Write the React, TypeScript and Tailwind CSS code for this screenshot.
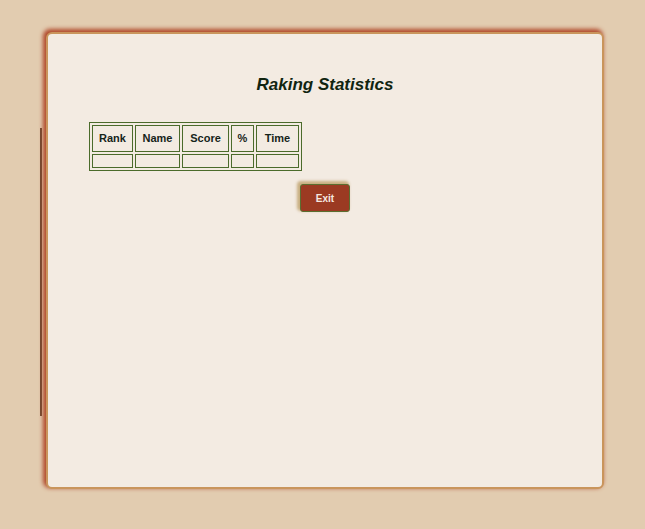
const columns = [
  { label: 'Rank', w: 'w-[41px]' },
  { label: 'Name', w: 'w-[45px]' },
  { label: 'Score', w: 'w-[47px]' },
  { label: '%', w: 'w-[23px]' },
  { label: 'Time', w: 'w-[43px]' },
];

export default function App() {
  return (
    <div className="min-h-screen bg-[#e2ccb0] flex items-start pl-[40px] pt-[32px] font-['Liberation_Sans',Arial,sans-serif]">
      {/* left edge strip */}
      <div className="w-[2px] h-[288px] mt-[96px] bg-[#6e4a32]" />

      {/* main panel */}
      <div className="ml-[4px] w-[558px] h-[457px] rounded-[6px] border-2 border-[#c9955c] bg-[#f3ebe2] shadow-[-2px_-2px_4px_1px_#b0482a] flex flex-col pt-[41px]">
        <h1 className="text-center text-[17px] leading-[20px] font-bold italic text-[#102410]">
          Raking Statistics
        </h1>

        <table className="self-start mt-[27px] ml-[41px] border border-[#4b6b2b] border-separate border-spacing-[2px] text-[11px] font-bold text-[#16241a]">
          <thead>
            <tr>
              {columns.map((c) => (
                <th key={c.label} className={`${c.w} h-[27px] p-0 border border-[#4b6b2b] text-center align-middle`}>
                  {c.label}
                </th>
              ))}
            </tr>
          </thead>
          <tbody>
            <tr>
              {columns.map((c) => (
                <td key={c.label} className="h-[14px] p-0 border border-[#4b6b2b]" />
              ))}
            </tr>
          </tbody>
        </table>

        <button className="mt-[13px] mx-auto w-[50px] h-[28px] rounded-[3px] bg-[#9b3a22] border border-[#5a6e30] shadow-[-2px_-2px_3px_1px_#c8ae80] text-[10px] font-bold text-[#f5e9e0]">
          Exit
        </button>
      </div>
    </div>
  );
}
